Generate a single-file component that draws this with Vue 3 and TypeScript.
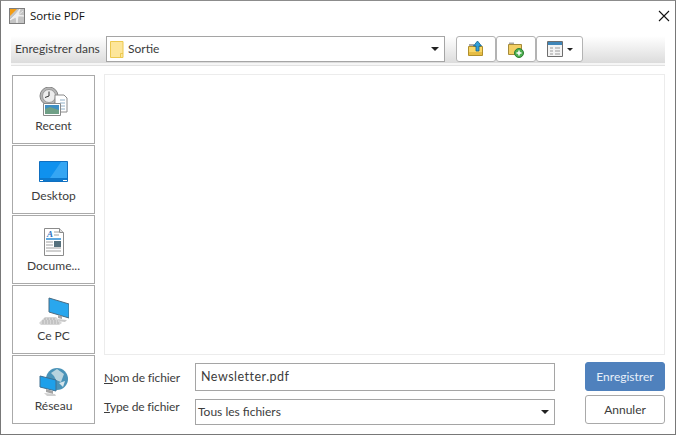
<script setup lang="ts">
const places = ['Recent', 'Desktop', 'Docume...', 'Ce PC', 'Réseau']
</script>

<template>
  <div class="dialog">
    <header class="titlebar">
      <svg class="app-icon" width="16" height="16" viewBox="0 0 16 16">
        <rect x="0.5" y="0.5" width="15" height="15" fill="#c4c4c4" stroke="#7d7d7d" />
        <path d="M1 1h7L1 8z" fill="#f39c12" />
        <path d="M14 3L8 8M11 1L9 7l6 1-6 0-1 7-1-6-6 3 5-5z" stroke="#f2f2f2" stroke-width=".8" fill="#eee" />
      </svg>
      <span class="title">Sortie PDF</span>
      <svg class="close" width="12" height="12" viewBox="0 0 12 12">
        <path d="M1 1l10 10M11 1L1 11" stroke="#111" stroke-width="1.1" />
      </svg>
    </header>

    <div class="toolbar">
      <span class="save-in">Enre<u>g</u>istrer dans</span>
      <div class="combo folder-combo">
        <svg width="14" height="17" viewBox="0 0 14 17">
          <path d="M.5.5h12.500v16H.5z" fill="#fde69a" stroke="#ecc94f" />
          <path d="M10.500 16.500v-4h2.500" fill="none" stroke="#ecc94f" />
        </svg>
        <span class="combo-text">Sortie</span>
        <i class="arrow"></i>
      </div>
      <div class="tools">
        <button class="tool">
          <svg width="16" height="16" viewBox="0 0 16 16">
            <path d="M1 5V3h5v2z" fill="#a9a9a9" />
            <path d="M.5 5.500h14v9H.5z" fill="#f8d768" stroke="#b08f2c" />
            <path d="M1 11h13v3H1z" fill="#e6bd45" />
            <path d="M8 10V5H5.500L9.500 0l4 5H11v5z" fill="#2f9fd8" stroke="#135f8f" stroke-width=".8" />
          </svg>
        </button>
        <button class="tool">
          <svg width="16" height="17" viewBox="0 0 16 17">
            <path d="M1 4V1.500h5V4z" fill="#a9a9a9" />
            <path d="M.5 3.500h13v10H.5z" fill="#f3cf64" stroke="#a58a3a" />
            <circle cx="11" cy="12" r="4.500" fill="#4caf50" stroke="#2e7d32" />
            <path d="M11 9.500v5M8.500 12h5" stroke="#fff" stroke-width="1.500" />
          </svg>
        </button>
        <button class="tool tool-wide">
          <svg width="16" height="16" viewBox="0 0 16 16">
            <path d="M.5.500h15v15H.5z" fill="#f4f4f4" stroke="#6e6e6e" />
            <path d="M1 1h14v3H1z" fill="#3f86b8" />
            <path d="M3 7h3M8 7h5M3 10h3M8 10h5M3 13h3M8 13h5" stroke="#9a9a9a" />
          </svg>
          <i class="arrow small"></i>
        </button>
      </div>
    </div>

    <div class="body">
      <nav class="places">
        <div v-for="(place, i) in places" :key="place" class="place">
          <span class="place-icon">
            <svg v-if="i === 0" width="30" height="30" viewBox="0 0 30 30">
              <circle cx="10" cy="9" r="9" fill="#b5b5b5" stroke="#858585" />
              <circle cx="10" cy="9" r="6.500" fill="#ededed" stroke="#9a9a9a" />
              <path d="M10 4.500V9l-4 1.500" fill="none" stroke="#333" />
              <path d="M16 8h9l3 3v14H16z" fill="#fff" stroke="#8a8a8a" />
              <path d="M21 13h5M21 16h5M21 19h5M21 22h5" stroke="#90b0c8" />
              <path d="M4.500 16.500h17v12h-17z" fill="#fff" stroke="#8a8a8a" />
              <path d="M6 18h14v5H6z" fill="#3f8fc4" />
              <path d="M6 22l5-2 9 3v4H6z" fill="#6f9f86" />
            </svg>
            <svg v-else-if="i === 1" class="desktop" width="29" height="21" viewBox="0 0 29 21">
              <path d="M.5.500h28v20H.5z" fill="#0f91ee" stroke="#0f6fc0" />
              <path d="M11 17L22 1h6v16z" fill="#35a6f3" />
              <path d="M1 17h27v3H1z" fill="#0d78cc" />
              <path d="M1 19.500h3M24 19.500h4" stroke="#fff" />
            </svg>
            <svg v-else-if="i === 2" width="22" height="30" viewBox="0 0 22 30">
              <path d="M1.500 1.500h15l4 4v23h-19z" fill="#fff" stroke="#8b8b8b" />
              <path d="M16.500 1.500v4h4" fill="#ddd" stroke="#8b8b8b" />
              <path d="M3 12h15" stroke="#2a8bd6" stroke-width="1.500" />
              <text x="4" y="10" class="doc-a">A</text>
              <path d="M11 5h5M11 8h5M3 15h7M3 18h7M3 21h15M3 24h15" stroke="#a0a0a0" />
              <path d="M11 14h7v6h-7z" fill="#55707c" />
            </svg>
            <svg v-else-if="i === 3" width="30" height="30" viewBox="0 0 30 30">
              <path d="M10 1l20 6v14L10 15z" fill="#29a7ee" stroke="#4b6a80" />
              <path d="M19 18l4 1v3l-4-1z" fill="#a8a8a8" />
              <path d="M18 22l10 1-2 2-8-1z" fill="#c8c8c8" />
              <path d="M6 20h11l6 6-3 2H2l-2-2z" fill="#d6d6d6" />
              <path d="M5 22h12M3 24h16M3 26h17" stroke="#b0b0b0" stroke-dasharray="2 1" />
            </svg>
            <svg v-else width="30" height="30" viewBox="0 0 30 30">
              <circle cx="18" cy="12" r="11" fill="#4a93b8" />
              <path d="M12 6l6-4 7 5-3 8-5-2-2-4z" fill="#b8d3de" />
              <path d="M20 16l6-2-2 6z" fill="#d5e5ec" />
              <path d="M1 9l16 4v11L1 20z" fill="#1ea0ea" stroke="#3f6f90" />
              <path d="M7 22l7 2v3l-7-2z" fill="#a4a4a4" />
              <path d="M5 26l11 1 1 2H8z" fill="#cfcfcf" />
            </svg>
          </span>
          <span class="place-name">{{ place }}</span>
        </div>
      </nav>

      <div class="main">
        <div class="list"></div>
        <div class="form">
          <div class="fields">
            <div class="field name-field">
              <label><u>N</u>om de fichier</label>
              <div class="input">Newsletter.pdf</div>
            </div>
            <div class="field type-field">
              <label><u>T</u>ype de fichier</label>
              <div class="combo type-combo">
                <span class="combo-text">Tous les fichiers</span>
                <i class="arrow"></i>
              </div>
            </div>
          </div>
          <div class="actions">
            <button class="btn primary">Enregistrer</button>
            <button class="btn">Annuler</button>
          </div>
        </div>
      </div>
    </div>
  </div>
</template>

<style>
html, body {
  background: #fff;
}
</style>

<style scoped>
.dialog {
  width: 676px;
  height: 435px;
  box-sizing: border-box;
  border: 1px solid #787878;
  border-top-color: #8c8c8c;
  background: #fff;
  padding: 0 10px;
  display: flex;
  flex-direction: column;
  font-family: "Lato", "Liberation Sans", sans-serif;
  font-size: 12px;
  color: #3c3c3c;
  overflow: hidden;
}

.titlebar {
  height: 35px;
  flex: none;
  display: flex;
  align-items: center;
  gap: 5px;
  margin-left: -2px;
  padding-bottom: 6px;
  box-sizing: border-box;
}

.title {
  font-family: "Open Sans", sans-serif;
  font-size: 11.5px;
  letter-spacing: -0.1px;
  color: #111;
}

.close {
  margin-left: auto;
  margin-right: -5px;
}

.toolbar {
  height: 30px;
  flex: none;
  display: flex;
  align-items: flex-start;
  background: linear-gradient(#fff, #dcdcdc 27px, #f6f6f6 27px);
  border-bottom: 1px solid #e2e2e2;
  box-sizing: border-box;
}

.save-in {
  width: 95px;
  flex: none;
  padding-left: 4px;
  box-sizing: border-box;
  line-height: 26px;
  white-space: nowrap;
}

.combo {
  height: 26px;
  box-sizing: border-box;
  border: 1px solid #a5a5a5;
  background: #fff;
  display: flex;
  align-items: center;
}

.folder-combo {
  width: 339px;
  flex: none;
  padding: 0 5px 0 3px;
  gap: 4px;
}

.type-combo {
  width: 360px;
  padding: 0 5px 0 2px;
}

.combo-text {
  flex: 1;
  margin-bottom: 2px;
}

.arrow {
  width: 0;
  height: 0;
  border: 4px solid transparent;
  border-top: 4px solid #222;
  border-bottom: 0;
  display: block;
}

.arrow.small {
  border-width: 3px;
  border-bottom: 0;
}

.tools {
  display: flex;
  margin-left: 11px;
}

.tool {
  width: 40px;
  height: 26px;
  padding: 0;
  box-sizing: border-box;
  border: 1px solid #b3b3b3;
  border-radius: 3px;
  background: #fff;
  display: flex;
  align-items: center;
  justify-content: center;
  gap: 4px;
}

.tool-wide {
  width: 47px;
}

.body {
  flex: 1;
  display: flex;
  gap: 9px;
  padding-top: 9px;
  min-height: 0;
}

.places {
  width: 83px;
  flex: none;
  margin-left: 1px;
  display: flex;
  flex-direction: column;
  gap: 1px;
}

.place {
  height: 69px;
  box-sizing: border-box;
  border: 1px solid #aaa;
  display: flex;
  flex-direction: column;
  align-items: center;
}

.place-icon {
  height: 41px;
  flex: none;
  display: flex;
  align-items: flex-end;
  justify-content: center;
}

.place-icon .desktop {
  margin-bottom: 5px;
}

.place-name {
  line-height: 18px;
}

.doc-a {
  font-family: "Liberation Serif", serif;
  font-size: 9px;
  font-style: italic;
  font-weight: 700;
  fill: #2a6fc0;
}

.main {
  flex: 1;
  display: flex;
  flex-direction: column;
  min-width: 0;
}

.list {
  height: 281px;
  flex: none;
  box-sizing: border-box;
  border: 1px solid #ececec;
  background: #fff;
  margin-top: -1px;
}

.form {
  display: flex;
  margin-top: 7px;
}

.fields {
  width: 451px;
  flex: none;
  display: flex;
  flex-direction: column;
  gap: 8px;
  margin-top: 1px;
}

.field {
  display: flex;
}

.name-field {
  align-items: center;
  height: 28px;
}

.type-field {
  height: 26px;
}

.field label {
  width: 91px;
  flex: none;
  letter-spacing: -0.15px;
}

.type-field label {
  line-height: 16px;
}

.input {
  width: 360px;
  height: 28px;
  box-sizing: border-box;
  border: 1px solid #a5a5a5;
  padding-left: 5px;
  font-size: 12.5px;
  letter-spacing: 0.5px;
  line-height: 25px;
}

.actions {
  margin-left: 30px;
  display: flex;
  flex-direction: column;
  gap: 4px;
}

.btn {
  width: 80px;
  height: 29px;
  box-sizing: border-box;
  border: 1px solid #a9a9a9;
  border-radius: 3px;
  background: #fff;
  font: inherit;
  color: #3c3c3c;
  padding: 0;
}

.btn.primary {
  background: #4f81bd;
  border-color: #4f81bd;
  color: #e8f0fa;
}
</style>
